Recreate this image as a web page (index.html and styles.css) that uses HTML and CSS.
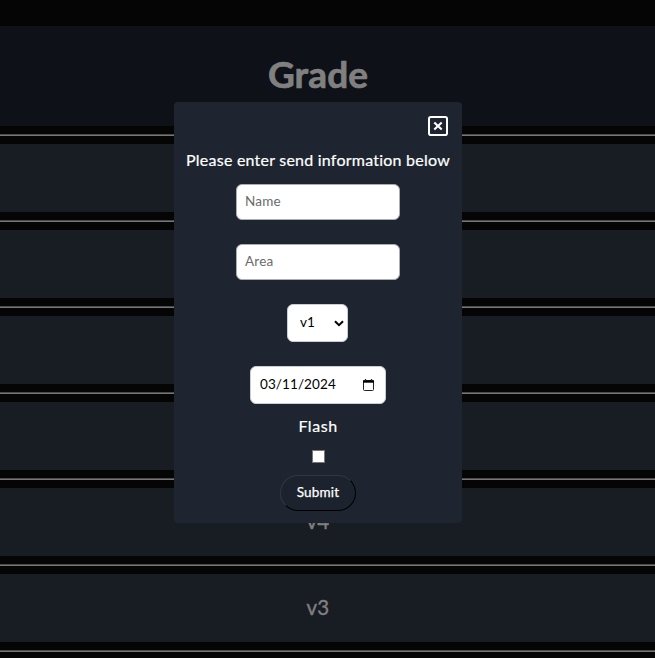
FILE: index.html
```html
<!DOCTYPE html>
<html lang="en">
<head>
<meta charset="utf-8">
<title>Grade</title>
<link rel="stylesheet" href="styles.css">
</head>
<body>
<main class="page">
  <header class="header"><h1>Grade</h1></header>
  <hr><section class="row"></section>
  <hr><section class="row"></section>
  <hr><section class="row"></section>
  <hr><section class="row"></section>
  <hr><section class="row"><span>v4</span></section>
  <hr><section class="row"><span>v3</span></section>
  <hr>
</main>
<form class="modal">
  <button class="close" type="button" aria-label="Close">
    <svg width="20" height="20" viewBox="0 0 20 20" fill="none" stroke="#fff"><rect x="1" y="1" width="18" height="18" rx="1.8" stroke-width="2"/><path d="M6.3 6.5l7.4 7M13.7 6.5l-7.4 7" stroke-width="2.1"/></svg>
  </button>
  <p class="prompt"><span>Please enter send information below</span></p>
  <input class="field" type="text" placeholder="Name">
  <input class="field" type="text" placeholder="Area">
  <div class="control select"><span>v1</span>
    <svg width="10" height="7" viewBox="0 0 10 7" fill="none" stroke="#000" stroke-width="2"><path d="M1 1.2l4 4 4-4"/></svg>
  </div>
  <div class="control date"><span>03/11/2024</span>
    <svg width="11" height="12" viewBox="0 0 11 12" fill="none" stroke="#222"><rect x=".5" y="1.5" width="10" height="10" rx="1" stroke-width="1"/><path d="M0 2.5h11" stroke="#000" stroke-width="2.4"/><path d="M2.5 0v2M8.5 0v2" stroke-width="1.2"/></svg>
  </div>
  <label class="flash" for="flash"><span>Flash</span></label>
  <input class="check" id="flash" type="checkbox">
  <button class="submit" type="button"><span>Submit</span></button>
</form>
</body>
</html>
```
FILE: styles.css
```css
* { box-sizing: border-box; }
html, body { margin: 0; height: 100%; overflow: hidden; background: #050505; }
body, input, button { font-family: Lato, "Open Sans", sans-serif; }
.page { padding-top: 26px; }
.header, .row { display: flex; align-items: center; justify-content: center; padding-right: 19px; padding-bottom: 3px; }
.header { height: 100px; padding-bottom: 4px; background: #0e1118; color: #808080; }
.header h1 { margin: 0; font-size: 37px; line-height: 46px; font-weight: 700; letter-spacing: .1px; -webkit-text-stroke: .7px #808080; }
.row { height: 68px; background: #181c23; color: #808080; font-size: 20.5px; letter-spacing: .2px; -webkit-text-stroke: .4px #808080; }
hr { height: 2px; margin: 8px 0; border: 0; border-top: 1px solid #4b4b4b; background: #777; }
.modal { position: fixed; left: 174px; top: 102px; width: 288px; height: 421px; border-radius: 4px; background: #1e2530; color: #fff; display: flex; flex-direction: column; align-items: center; }
.close { align-self: flex-end; width: 20px; height: 20px; margin: 14px 14px 0 0; padding: 0; border: 0; background: none; }
.close svg { display: block; }
.prompt { margin: 13px 0 13px; font-size: 16px; line-height: 22px; letter-spacing: .23px; white-space: nowrap; -webkit-text-stroke: .2px #fff; }
.field { flex: none; width: 164px; height: 36px; margin: 0 0 24px; padding: 0 8px 2px; border: 1px solid #a9adb5; border-radius: 6px; background: #fff; font-size: 13.5px; letter-spacing: .2px; }
.field::placeholder { color: #6b6b6b; }
.control { display: flex; align-items: center; justify-content: space-between; background: #fff; color: #000; border: 1px solid #c9cdd5; border-radius: 6px; height: 38px; font-size: 13.5px; letter-spacing: .1px; }
.control span { padding-bottom: 2px; }
.select { width: 61px; padding: 0 3px 0 12px; margin: 0 1px 24px 0; }
.date { width: 136px; padding: 0 11px 0 9px; }
.date svg { margin-bottom: 1px; }
.flash { margin-top: 11px; font-size: 16px; line-height: 22px; letter-spacing: .55px; -webkit-text-stroke: .2px #fff; }
.check { width: 13px; height: 13px; margin: 13px 0 12px; appearance: none; background: #fff; border: 1px solid #767676; }
.submit { width: 76px; height: 36px; padding: 0 0 2px; border: 1px solid; border-color: #2c3a45 #000 #000 #2c3a45; border-radius: 18px; background: #1c232e; color: #fff; font-size: 13.5px; letter-spacing: .2px; -webkit-text-stroke: .25px #fff; }
```
